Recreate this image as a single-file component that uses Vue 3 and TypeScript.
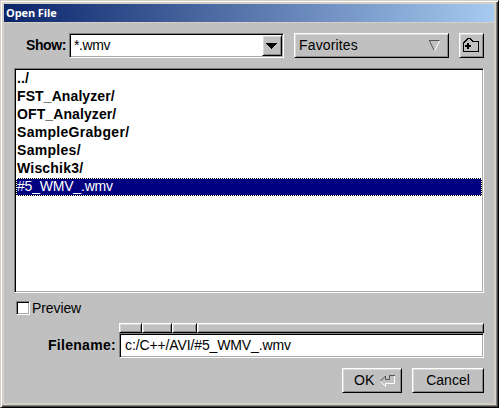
<script setup lang="ts">
import { ref } from 'vue'

interface Entry {
  name: string
  folder: boolean
}

const entries: Entry[] = [
  { name: '../', folder: true },
  { name: 'FST_Analyzer/', folder: true },
  { name: 'OFT_Analyzer/', folder: true },
  { name: 'SampleGrabger/', folder: true },
  { name: 'Samples/', folder: true },
  { name: 'Wischik3/', folder: true },
  { name: '#5_WMV_.wmv', folder: false },
]
const selected = ref('#5_WMV_.wmv')
const preview = ref(false)
const segments = ['c:/', 'C++/', 'AVI/', '']
</script>

<template>
  <div class="window">
    <header class="titlebar"><span class="title">Open File</span></header>
    <main class="content">
      <div class="toolbar">
        <span class="label show-label">Show:</span>
        <div class="combo sunken">
          <span class="text pattern">*.wmv</span>
          <button class="drop raised" aria-label="Choose filter">
            <svg width="11" height="6" viewBox="0 0 11 6" shape-rendering="crispEdges">
              <path d="M0 0H11V1H10V2H9V3H8V4H7V5H6V6H5V5H4V4H3V3H2V2H1V1H0Z" fill="#000" />
            </svg>
          </button>
        </div>
        <button class="favorites raised">
          <span class="text fav-text">Favorites</span>
          <svg width="11" height="12" viewBox="0 0 11 12">
            <path d="M0 .5H10.5" stroke="#555" fill="none" />
            <path d="M.5 1L5.2 10.5" stroke="#555" fill="none" />
            <path d="M10.5 1L5.5 11" stroke="#fff" fill="none" />
          </svg>
        </button>
        <button class="new-folder raised" aria-label="New folder">
          <svg width="17" height="15" viewBox="0 0 17 15" shape-rendering="crispEdges">
            <path d="M.5 13.5V4.5H1.5V3.5H2.5V2.5H3.5V1.5H4.5V.5H7.5V1.5H8.5V2.5H9.5V3.5H15.5V13.5Z" stroke="#000" fill="none" />
            <path d="M4 5H6V7H8V9H6V11H4V9H2V7H4Z" fill="#000" />
          </svg>
        </button>
      </div>

      <ul class="list sunken">
        <li
          v-for="e in entries"
          :key="e.name"
          class="row"
          :class="{ folder: e.folder, selected: e.name === selected }"
          @click="selected = e.name"
        >
          <span class="text">{{ e.name }}</span>
        </li>
      </ul>

      <div class="preview" @click="preview = !preview">
        <span class="check sunken"><span v-if="preview" class="tick">✓</span></span>
        <span class="text preview-text">Preview</span>
      </div>

      <div class="file-row">
        <span class="label file-label">Filename:</span>
        <div class="file-field">
          <div class="segments">
            <span v-for="(s, i) in segments" :key="i" class="segment raised" :class="'segment-' + i"></span>
          </div>
          <div class="file-input sunken"><span class="text path">c:/C++/AVI/#5_WMV_.wmv</span></div>
        </div>
      </div>

      <div class="actions">
        <button class="ok raised">
          <span class="text ok-text">OK</span>
          <svg width="16" height="12" viewBox="0 0 16 12">
            <path d="M.5 6.5L5.5 11.5V8.5H14.5V.5" stroke="#fff" fill="none" />
            <path d="M.5 6L5.5 1V4.5H9.5V.5H15" stroke="#555" fill="none" />
          </svg>
        </button>
        <button class="cancel raised"><span class="text cancel-text">Cancel</span></button>
      </div>
    </main>
  </div>
</template>

<style>
body {
  margin: 0;
  overflow: hidden;
}
</style>

<style scoped>
* {
  box-sizing: border-box;
}
.window {
  width: 499px;
  height: 408px;
  padding: 3px 4px 4px 3px;
  background: #d4d0c8;
  border: 1px solid;
  border-color: #d4d0c8 #000 #000 #d4d0c8;
  box-shadow: inset 1px 1px #fff, inset -1px -1px #404040, inset -2px -2px #808080;
  font: 14px/18px "Liberation Sans", Arial, sans-serif;
  color: #000;
}
.titlebar {
  height: 18px;
  padding-left: 2px;
  background: linear-gradient(90deg, #0a246a, #a6caf0);
  color: #fff;
  font: bold 11px/18px "Open Sans", "Noto Sans", sans-serif;
}
.title {
  display: block;
  letter-spacing: -0.1px;
}
.content {
  height: 380px;
  margin-top: 1px;
  padding: 10px 10px 0;
  background: #c0c0c0;
}
.sunken {
  background: #fff;
  border: 1px solid;
  border-color: #808080 #fff #fff #808080;
  box-shadow: inset 1px 1px #000, inset -1px -1px #aaa;
}
.raised {
  padding: 0;
  border: 1px solid;
  border-color: #fff #000 #000 #fff;
  border-radius: 0;
  background: #c0c0c0;
  box-shadow: inset 1px 1px #d8d8d8, inset -1px -1px #888;
  font: inherit;
  color: inherit;
}
.text,
.label {
  white-space: pre;
}
.label {
  font-weight: bold;
}
.toolbar {
  display: flex;
  height: 25px;
}
.show-label {
  width: 55px;
  padding-right: 3px;
  line-height: 24px;
  text-align: right;
  letter-spacing: -0.4px;
}
.combo {
  display: flex;
  justify-content: space-between;
  width: 215px;
  padding: 1px;
}
.pattern {
  padding-left: 3px;
  line-height: 20px;
  letter-spacing: -0.4px;
}
.drop {
  display: flex;
  align-items: center;
  justify-content: center;
  width: 20px;
  height: 21px;
  padding-right: 1px;
}
.favorites {
  display: flex;
  align-items: center;
  justify-content: space-between;
  width: 155px;
  margin-left: 10px;
  padding: 0 8px 0 4px;
}
.fav-text {
  margin-top: -1px;
  letter-spacing: 0.15px;
}
.new-folder {
  display: flex;
  width: 25px;
  margin-left: 10px;
  padding: 4px 0 0 3px;
}
.list {
  height: 225px;
  margin: 10px 0 0;
  padding: 1px;
  list-style: none;
}
.row {
  height: 18px;
  padding-left: 1px;
  line-height: 17px;
  letter-spacing: -0.2px;
}
.folder {
  font-weight: bold;
  letter-spacing: 0.1px;
}
.row:nth-child(4),
.row:nth-child(5) {
  letter-spacing: 0.3px;
}
.row:nth-child(6) {
  letter-spacing: 0.2px;
}
.selected {
  background: #000080;
  color: #fff;
  box-shadow: inset 0 0 0 1px #000;
  outline: 1px dotted #fff;
  outline-offset: -1px;
}
.preview {
  display: flex;
  align-items: center;
  height: 14px;
  margin: 8px 0 0 2px;
}
.preview-text {
  letter-spacing: -0.1px;
}
.check {
  width: 14px;
  height: 14px;
  margin-right: 2px;
}
.tick {
  display: block;
  font-size: 11px;
  line-height: 12px;
  text-align: center;
}
.file-row {
  display: flex;
  margin-top: 8px;
}
.file-label {
  width: 105px;
  padding: 10px 3px 0 0;
  line-height: 24px;
  text-align: right;
  letter-spacing: 0.3px;
}
.file-field {
  width: 365px;
}
.segments {
  display: flex;
  height: 10px;
}
.segment-0 {
  width: 23px;
}
.segment-1 {
  width: 30px;
}
.segment-2 {
  width: 25px;
}
.segment-3 {
  flex: 1;
}
.file-input {
  height: 25px;
  padding-left: 5px;
}
.path {
  display: block;
  line-height: 22px;
  letter-spacing: -0.12px;
}
.actions {
  display: flex;
  justify-content: flex-end;
  gap: 10px;
  height: 25px;
  margin-top: 10px;
}
.ok {
  display: flex;
  align-items: center;
  justify-content: space-between;
  width: 60px;
  padding: 0 5px 0 11px;
}
.ok-text,
.cancel-text {
  display: block;
  margin-top: -1px;
}
.cancel {
  width: 72px;
}
</style>
